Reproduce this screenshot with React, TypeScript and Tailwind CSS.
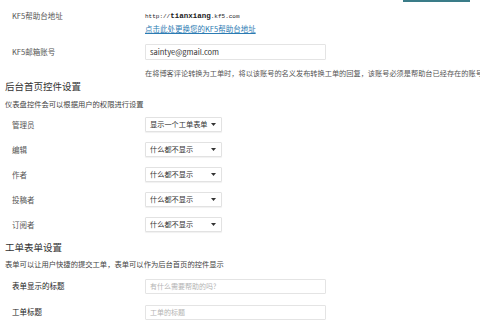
const font = { fontFamily: '"Noto Sans CJK SC", "Noto Sans", sans-serif' };

const Select = ({ value }: { value: string }) => (
  <div className="w-[77px] h-[15px] border border-[#e2e2e2] bg-white rounded-[1px] shadow-[0_1px_1px_rgba(0,0,0,0.06)] flex items-center justify-between pl-[4px] pr-[5px] text-[7.2px] text-[#333]">
    <span>{value}</span>
    <svg width="5" height="3" viewBox="0 0 5 3">
      <path d="M0 0 L5 0 L2.5 3 Z" fill="#333" />
    </svg>
  </div>
);

const SelectRow = ({ label, value }: { label: string; value: string }) => (
  <div className="h-[25px] flex items-center pl-[7px]">
    <div className="w-[133px] shrink-0 text-[7.5px] text-[#555]">{label}</div>
    <Select value={value} />
  </div>
);

const InputRow = ({ label, placeholder }: { label: string; placeholder: string }) => (
  <div className="h-[26px] flex items-center pl-[7px]">
    <div className="w-[133px] shrink-0 text-[7.5px] text-[#222]">{label}</div>
    <div className="w-[181px] h-[15px] border border-[#e4e4e4] bg-white rounded-[1px] flex items-center pl-[4px] text-[7px] text-[#b4b4b4]">
      {placeholder}
    </div>
  </div>
);

export default function App() {
  return (
    <div className="w-[480px] h-[320px] overflow-hidden bg-white text-[#444]" style={font}>
      <div className="h-[2px] flex">
        <div className="ml-[403px] w-[67px] h-[2px] bg-[#3a7c88]" />
      </div>
      <div className="pl-[5px]">
        <div className="h-[35px] flex pl-[7px] pt-[9px]">
          <div className="w-[133px] shrink-0 text-[7.5px] leading-[10px] text-[#555]">KF5帮助台地址</div>
          <div className="flex flex-col">
            <div className="h-[10px] leading-[10px] text-[6px] text-[#222]" style={{ fontFamily: '"Liberation Mono", monospace' }}>
              http://<span className="font-bold text-[7.5px]">tianxiang</span>.kf5.com
            </div>
            <div className="mt-[3px] leading-[10px] text-[7.5px] text-[#2b7bb3] underline">点击此处更换您的KF5帮助台地址</div>
          </div>
        </div>
        <div className="flex pl-[7px] pt-[7px]">
          <div className="w-[133px] shrink-0 text-[7.5px] leading-[10px] pt-[3px] text-[#555]">KF5邮箱账号</div>
          <div className="flex flex-col shrink-0">
            <div className="w-[181px] h-[16px] border border-[#e4e4e4] rounded-[1px] flex items-center pl-[4px] text-[7.5px] text-[#333]">
              saintye@gmail.com
            </div>
            <div className="mt-[8px] whitespace-nowrap text-[7.2px] leading-[10px] text-[#555]">
              在将博客评论转换为工单时，将以该账号的名义发布转换工单的回复，该账号必须是帮助台已经存在的账号
            </div>
          </div>
        </div>
        <div className="mt-[1px] h-[14px] leading-[14px] text-[9.5px] text-[#333]">后台首页控件设置</div>
        <div className="mt-[6px] h-[10px] leading-[10px] text-[7.3px] text-[#444]">仪表盘控件会可以根据用户的权限进行设置</div>
        <div className="mt-[3px]">
          <SelectRow label="管理员" value="显示一个工单表单" />
          <SelectRow label="编辑" value="什么都不显示" />
          <SelectRow label="作者" value="什么都不显示" />
          <SelectRow label="投稿者" value="什么都不显示" />
          <SelectRow label="订阅者" value="什么都不显示" />
        </div>
        <div className="mt-[3px] h-[14px] leading-[14px] text-[9.5px] text-[#333]">工单表单设置</div>
        <div className="mt-[5px] h-[10px] leading-[10px] text-[7.3px] text-[#444]">表单可以让用户快捷的提交工单，表单可以作为后台首页的控件显示</div>
        <div className="mt-[4px]">
          <InputRow label="表单显示的标题" placeholder="有什么需要帮助的吗?" />
          <InputRow label="工单标题" placeholder="工单的标题" />
        </div>
      </div>
    </div>
  );
}
